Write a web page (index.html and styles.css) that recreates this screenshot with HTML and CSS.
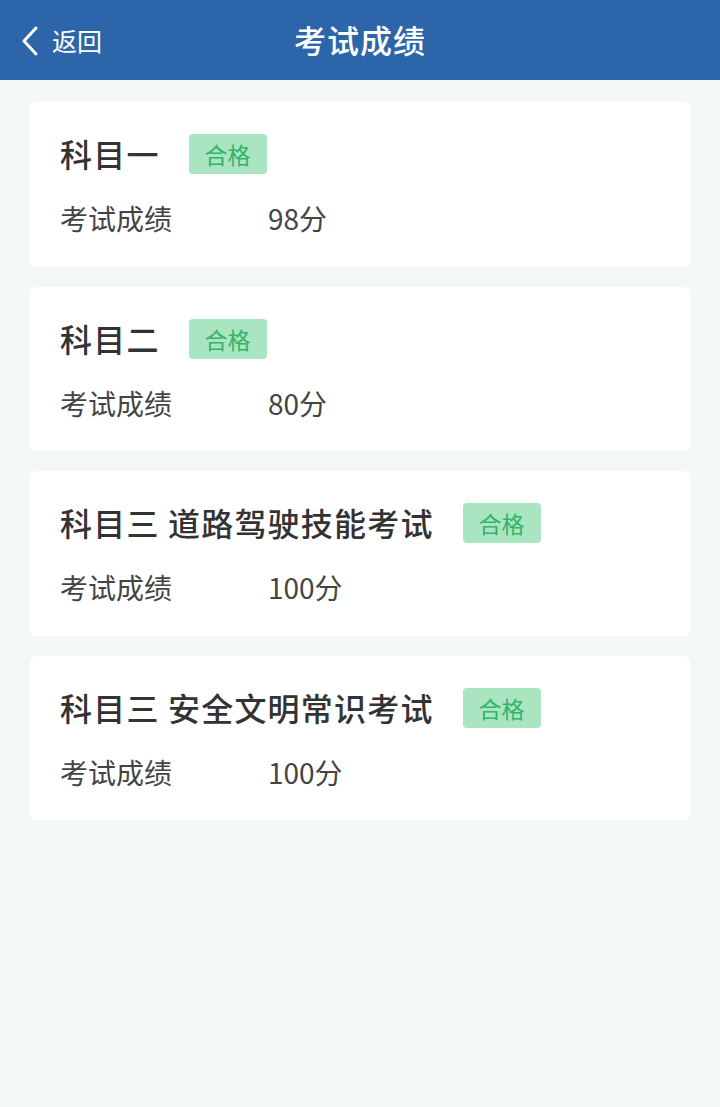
FILE: index.html
```html
<!DOCTYPE html>
<html lang="zh-CN">
<head>
    <meta charset="UTF-8">
    <meta name="viewport" content="width=device-width, initial-scale=1.0">
    <title>考试成绩</title>
    <link rel="stylesheet" href="styles.css">
</head>
<body>

<div class="header">
    <a class="back" href="#">
        <svg class="back-icon" width="20" height="32" viewBox="0 0 20 32">
            <path d="M16 3 L4 16 L16 29" fill="none" stroke="#fff" stroke-width="3" stroke-linecap="round" stroke-linejoin="round"/>
        </svg>
        <span>返回</span>
    </a>
    <h1 class="title">考试成绩</h1>
</div>

<div class="list">
    <!-- 科目一 -->
    <div class="card">
        <div class="card-head">
            <span class="subject">科目一</span>
            <span class="badge">合格</span>
        </div>
        <div class="score-row">
            <span class="label">考试成绩</span>
            <span class="value">98分</span>
        </div>
    </div>

    <!-- 科目二 -->
    <div class="card">
        <div class="card-head">
            <span class="subject">科目二</span>
            <span class="badge">合格</span>
        </div>
        <div class="score-row">
            <span class="label">考试成绩</span>
            <span class="value">80分</span>
        </div>
    </div>

    <!-- 科目三 -->
    <div class="card">
        <div class="card-head">
            <span class="subject">科目三 道路驾驶技能考试</span>
            <span class="badge">合格</span>
        </div>
        <div class="score-row">
            <span class="label">考试成绩</span>
            <span class="value">100分</span>
        </div>
    </div>

    <div class="card">
        <div class="card-head">
            <span class="subject">科目三 安全文明常识考试</span>
            <span class="badge">合格</span>
        </div>
        <div class="score-row">
            <span class="label">考试成绩</span>
            <span class="value">100分</span>
        </div>
    </div>
</div>

</body>
</html>
```

FILE: styles.css
```css
body {
    margin: 0;
    background-color: #f3f7f8;
    font-family: "Noto Sans CJK SC", "Noto Sans", sans-serif;
    color: #333;
}
.header {
    height: 80px;
    background-color: #2d65aa;
    display: flex;
    align-items: center;
    justify-content: center;
    position: relative;
}
.back {
    position: absolute;
    left: 20px;
    top: 0;
    height: 80px;
    display: flex;
    align-items: center;
    gap: 12px;
    color: #fff;
    text-decoration: none;
    font-size: 25px;
}
.back-icon {
    margin-top: 2px;
}
.title {
    margin: 0;
    padding-bottom: 3px;
    color: #fff;
    font-size: 32px;
    font-weight: 500;
    letter-spacing: 1px;
}
.list {
    padding: 22px 30px;
    display: flex;
    flex-direction: column;
    gap: 20px;
}
.card {
    background-color: #fff;
    border-radius: 6px;
    padding: 32px 30px 28.5px;
}
.card-head {
    display: flex;
    align-items: center;
    height: 40px;
}
.subject {
    padding-bottom: 2px;
    font-size: 32px;
    font-weight: 500;
    color: #333;
    letter-spacing: 1.2px;
}
.badge {
    margin-left: 29px;
    height: 40px;
    padding: 0 16px;
    display: flex;
    align-items: center;
    background-color: #a9e5c0;
    color: #34b36a;
    font-size: 23px;
    border-radius: 4px;
}
.score-row {
    margin-top: 24px;
    display: flex;
    align-items: center;
    height: 40px;
    font-size: 28px;
    color: #444;
}
.label {
    width: 208px;
}
```
